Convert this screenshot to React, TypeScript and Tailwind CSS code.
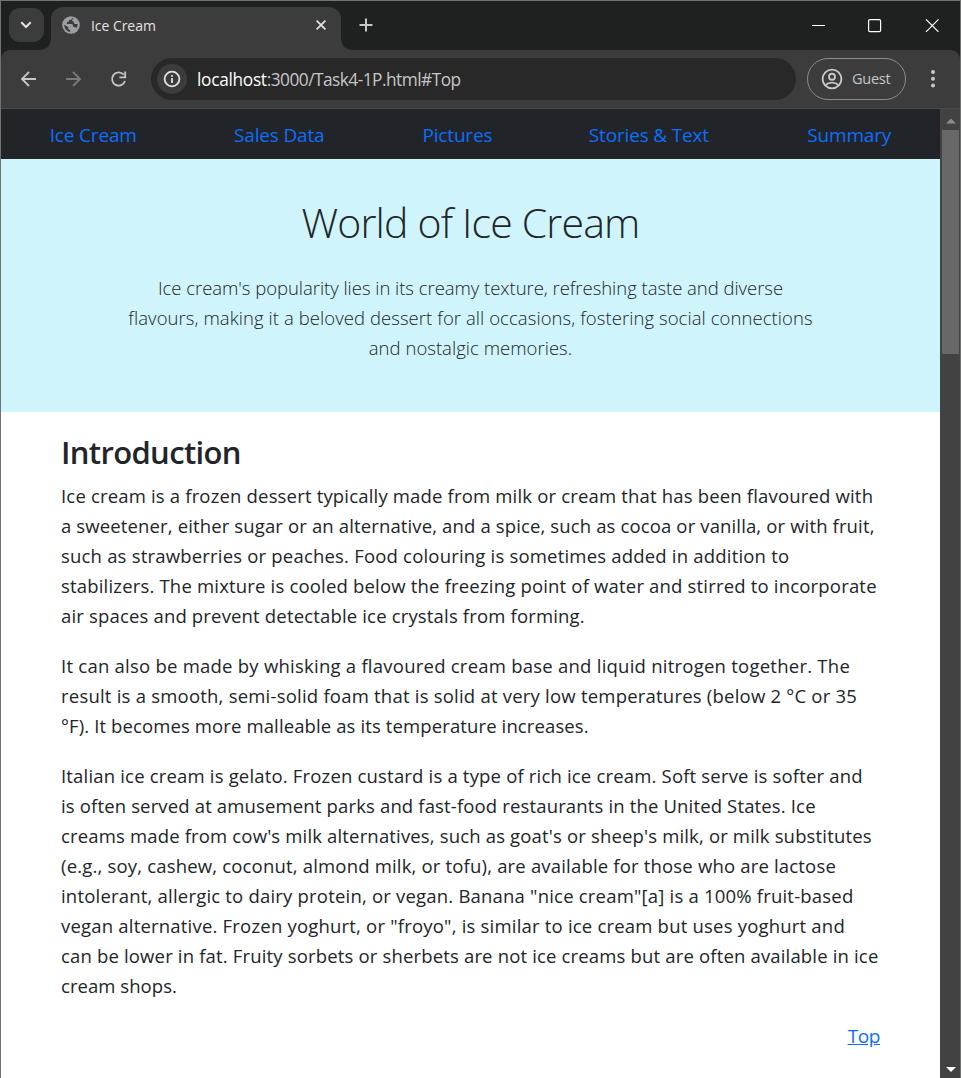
import React from 'react';

const links = [
  { label: 'Ice Cream', width: 'w-[87px]' },
  { label: 'Sales Data', width: 'w-[91px]' },
  { label: 'Pictures', width: 'w-[69px]' },
  { label: 'Stories & Text', width: 'w-[121px]' },
  { label: 'Summary', width: 'w-[84px]' },
];

type Line = { text: string; track: string };

const paragraphs: Line[][] = [
  [
    { text: 'Ice cream is a frozen dessert typically made from milk or cream that has been flavoured with', track: 'tracking-[0.174px]' },
    { text: 'a sweetener, either sugar or an alternative, and a spice, such as cocoa or vanilla, or with fruit,', track: 'tracking-[0.135px]' },
    { text: 'such as strawberries or peaches. Food colouring is sometimes added in addition to', track: 'tracking-[0.195px]' },
    { text: 'stabilizers. The mixture is cooled below the freezing point of water and stirred to incorporate', track: 'tracking-[0.183px]' },
    { text: 'air spaces and prevent detectable ice crystals from forming.', track: 'tracking-[0.167px]' },
  ],
  [
    { text: 'It can also be made by whisking a flavoured cream base and liquid nitrogen together. The', track: 'tracking-[0.24px]' },
    { text: 'result is a smooth, semi-solid foam that is solid at very low temperatures (below 2 °C or 35', track: 'tracking-[0.217px]' },
    { text: '°F). It becomes more malleable as its temperature increases.', track: 'tracking-[0.117px]' },
  ],
  [
    { text: 'Italian ice cream is gelato. Frozen custard is a type of rich ice cream. Soft serve is softer and', track: 'tracking-[0.18px]' },
    { text: 'is often served at amusement parks and fast-food restaurants in the United States. Ice', track: 'tracking-[0.15px]' },
    { text: "creams made from cow's milk alternatives, such as goat's or sheep's milk, or milk substitutes", track: 'tracking-[0.16px]' },
    { text: '(e.g., soy, cashew, coconut, almond milk, or tofu), are available for those who are lactose', track: 'tracking-[0.18px]' },
    { text: 'intolerant, allergic to dairy protein, or vegan. Banana "nice cream"[a] is a 100% fruit-based', track: 'tracking-[0.2px]' },
    { text: 'vegan alternative. Frozen yoghurt, or "froyo", is similar to ice cream but uses yoghurt and', track: 'tracking-[0.2px]' },
    { text: 'can be lower in fat. Fruity sorbets or sherbets are not ice creams but are often available in ice', track: 'tracking-[0.165px]' },
    { text: 'cream shops.', track: 'tracking-[0.05px]' },
  ],
];

const lead: Line[] = [
  { text: "Ice cream's popularity lies in its creamy texture, refreshing taste and diverse", track: 'tracking-[-0.035px]' },
  { text: 'flavours, making it a beloved dessert for all occasions, fostering social connections', track: 'tracking-[0.07px]' },
  { text: 'and nostalgic memories.', track: 'tracking-[0.03px]' },
];

function TabStrip() {
  return (
    <div className="flex h-[49px] shrink-0 items-start bg-[#1f2120] pl-2">
      <button className="mt-[7px] flex h-[34px] w-[35px] items-center justify-center rounded-[11px] bg-[#3c3c3c] pr-[1px]">
        <svg width="12" height="8" viewBox="0 0 12 8" fill="none" stroke="#e3e3e3" strokeWidth="2">
          <path d="M1.3 1.3 6 6l4.7-4.7" />
        </svg>
      </button>
      <svg className="mt-[37px] ml-[-5px]" width="12" height="12" viewBox="0 0 12 12">
        <path d="M12 0v12H0C8 12 12 7 12 0Z" fill="#3c3c3c" />
      </svg>
      <div className="mt-[6px] flex h-[43px] w-[290px] items-start rounded-t-[12px] bg-[#3c3c3c] pt-[9px] pl-[11px]">
        <svg width="18" height="18" viewBox="0 0 18 18">
          <circle cx="9" cy="9" r="8.8" fill="#9aa0a6" />
          <path
            d="M10 2c0 1.2-.6 2-1.8 2H6.8v2H4.9v2h4.5c1.2 0 1.7.8 1.7 2v1h1.2c1.2 0 1.7.6 2 1.3A7 7 0 0 0 15.7 8h-2.3c-1 0-1.6-.6-1.6-1.5V5.3h-1.6V4c0-.9.9-1.6 1.8-1.6M2.1 8.8A7 7 0 0 0 8.2 16v-2c-1.1 0-1.9-.8-1.9-1.8v-1z"
            fill="#3c3c3c"
          />
        </svg>
        <span className="ml-[11px] w-[225px] text-[14px] leading-[19px] tracking-[-0.05px] text-[#e3e3e3]">Ice Cream</span>
        <svg className="mt-[4px]" width="10" height="10" viewBox="0 0 10 10" stroke="#e3e3e3" strokeWidth="1.7">
          <path d="m.6.6 8.8 8.8M9.4.6.6 9.4" />
        </svg>
      </div>
      <svg className="mt-[37px]" width="12" height="12" viewBox="0 0 12 12">
        <path d="M0 0v12h12C4 12 0 7 0 0Z" fill="#3c3c3c" />
      </svg>
      <svg className="mt-[17px] ml-[6px]" width="14" height="14" viewBox="0 0 14 14" stroke="#c7c7c7" strokeWidth="2">
        <path d="M7 .5v13M.5 7h13" />
      </svg>
      <svg className="mt-[16px] ml-[439px]" width="128" height="17" viewBox="0 0 128 17" fill="none" stroke="#fff" strokeWidth="1.2">
        <path d="M0 8.5h13" strokeWidth="1" />
        <rect x="56.6" y="2.6" width="12" height="12" rx="1.3" />
        <path d="m114 2.3 12.5 12.5m0-12.5L114 14.8" />
      </svg>
    </div>
  );
}

function Toolbar() {
  return (
    <div className="flex h-[59px] shrink-0 items-start rounded-t-[9px] border-b border-[#494949] bg-[#3c3c3c]">
      <svg className="mt-[20px] ml-[19px]" width="108" height="18" viewBox="0 0 108 18" fill="none" strokeWidth="1.8">
        <path d="M16 9H2m7-7L2 9l7 7" stroke="#c7c7c7" />
        <path d="M46 9h14m-7-7 7 7-7 7" stroke="#7b7b7b" />
        <path d="M103.7 4.7A6.6 6.6 0 1 0 105 11M105.2 1.5v5.8h-5.8" stroke="#c7c7c7" />
      </svg>
      <div className="mt-[8px] ml-[23px] flex h-[42px] w-[645px] items-center rounded-full bg-[#282828] pl-[6px]">
        <span className="flex size-[30px] items-center justify-center rounded-full bg-[#3c3c3c]">
          <svg width="18" height="18" viewBox="0 0 18 18" fill="none" stroke="#e3e3e3" strokeWidth="1.8">
            <circle cx="9" cy="9" r="7.4" />
            <path d="M9 8v5M9 5v1.7" />
          </svg>
        </span>
        <span className="mt-[2px] ml-[10px] text-[17.3px] leading-6 whitespace-nowrap text-[#c7c7c7]">
          <span className="tracking-[-0.3px] text-white">localhost</span>
          <span className="tracking-[-0.52px]">:3000/Task4-1P.html#Top</span>
        </span>
      </div>
      <div className="mt-[8px] ml-[11px] flex h-[42px] w-[99px] items-center rounded-full border border-[#8b8b8b] pl-[13px]">
        <svg width="22" height="22" viewBox="0 0 22 22" fill="none" stroke="#c7c7c7" strokeWidth="1.9">
          <circle cx="11" cy="11" r="9.4" />
          <circle cx="11" cy="8.8" r="3" />
          <path d="M4.4 17.2c3.5-3.4 9.7-3.4 13.2 0" />
        </svg>
        <span className="mb-[1px] ml-[9px] text-[14.5px] tracking-[-0.25px] text-[#c7c7c7]">Guest</span>
      </div>
      <svg className="mt-[19px] ml-[24px]" width="6" height="20" viewBox="0 0 6 20" fill="#c7c7c7">
        <circle cx="3" cy="3" r="2" />
        <circle cx="3" cy="9.8" r="2" />
        <circle cx="3" cy="16.6" r="2" />
      </svg>
    </div>
  );
}

function ScrollBar() {
  return (
    <div className="flex w-[20px] shrink-0 flex-col items-center bg-[#424242] pl-[1px]">
      <svg className="mt-[9px]" width="10" height="6" viewBox="0 0 10 6">
        <path d="M0 5.5 5 .5l5 5z" fill="#8b8b8b" />
      </svg>
      <div className="mt-[6px] h-[224px] w-[17px] bg-[#686868]" />
      <svg className="mt-auto mb-[5px]" width="10" height="6" viewBox="0 0 10 6">
        <path d="M0 0h10L5 5z" fill="#fff" />
      </svg>
    </div>
  );
}

export default function App() {
  return (
    <div className="flex h-[1078px] w-[961px] flex-col overflow-hidden border-x border-t border-[#707372] bg-[#1f2120] font-['Open_Sans','Noto_Sans',sans-serif] text-[#212529]">
      <TabStrip />
      <Toolbar />
      <div className="flex min-h-0 flex-1">
        <div className="min-w-0 flex-1 bg-white">
          <nav className="flex h-[50px] items-center justify-around bg-[#212529] pt-[3px] text-[19px] tracking-[-0.17px] text-[#0d6efd]">
            {links.map((l) => (
              <a key={l.label} className={`${l.width} whitespace-nowrap`}>{l.label}</a>
            ))}
          </nav>
          <header className="h-[253px] bg-[#cff4fc] pt-[38px] text-center font-light">
            <h1 className="text-[41px] leading-[50px] tracking-[-0.82px]">World of Ice Cream</h1>
            <p className="mt-[26px] text-[18.5px] leading-[30px] whitespace-nowrap">
              {lead.map((line) => (
                <span key={line.text} className={`block ${line.track}`}>{line.text}</span>
              ))}
            </p>
          </header>
          <main className="px-[60px] pt-[21px]">
            <h2 className="text-[31px] leading-[38px] font-semibold tracking-[-0.65px]">Introduction</h2>
            <div className="mt-[10px] flex flex-col gap-5 text-[18.5px] leading-[30px] whitespace-nowrap">
              {paragraphs.map((lines) => (
                <p key={lines[0].text}>
                  {lines.map((line) => (
                    <span key={line.text} className={`block ${line.track}`}>{line.text}</span>
                  ))}
                </p>
              ))}
            </div>
            <div className="mt-5 text-right text-[19px] leading-[30px] tracking-[-0.4px]">
              <a className="text-[#0d6efd] underline">Top</a>
            </div>
          </main>
        </div>
        <ScrollBar />
      </div>
    </div>
  );
}
